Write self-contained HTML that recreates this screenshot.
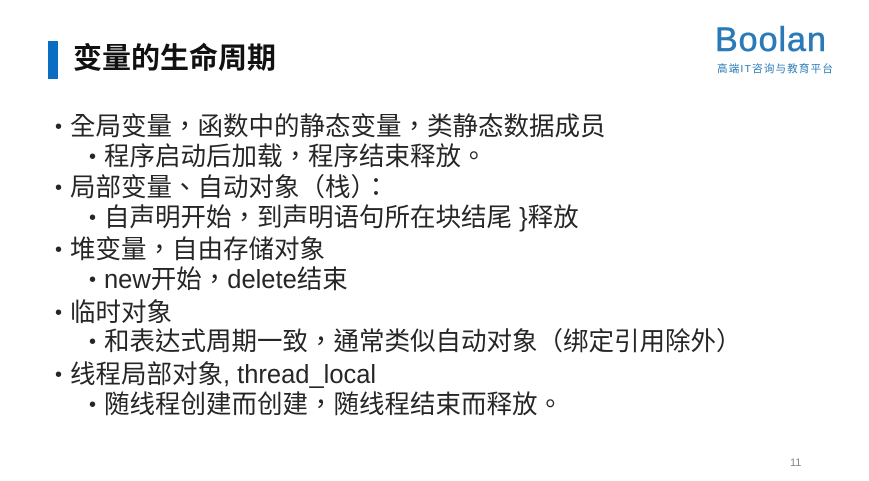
<!DOCTYPE html>
<html><head><meta charset="utf-8"><style>
body{margin:0;width:869px;height:481px;background:#fff;position:relative;overflow:hidden;font-family:"Liberation Sans","Noto Sans CJK TC",sans-serif;color:#222}
.bar{position:absolute;left:48px;top:41px;width:10px;height:38px;background:#0a6fc2}
.title{position:absolute;left:73px;top:42px;font-size:29px;font-weight:bold;color:#111;line-height:34px;font-family:"Liberation Sans","Noto Sans CJK SC",sans-serif}
.logo{position:absolute;left:715px;top:21px;font-size:34px;color:#2a7ab8;line-height:38px;letter-spacing:1px;-webkit-text-stroke:0.6px #2a7ab8}
.sub{position:absolute;left:717px;top:61px;font-size:10.5px;color:#2a7ab8;letter-spacing:1.2px}
.l{position:absolute;font-size:25.5px;line-height:30px;white-space:nowrap;color:#262626}
.l1{left:70px}.l2{left:104px}
.l::before{content:"•";position:absolute;left:-15px;font-size:20px}
.pg{position:absolute;left:790px;top:457px;font-size:11px;color:#888}
</style></head><body>
<div class="bar"></div>
<div class="title">变量的生命周期</div>
<div class="logo">Boolan</div>
<div class="sub">高端IT咨询与教育平台</div>
<div class="l l1" style="top:112px">全局变量，函数中的静态变量，类静态数据成员</div>
<div class="l l2" style="top:142px">程序启动后加载，程序结束释放。</div>
<div class="l l1" style="top:173px">局部变量、自动对象（栈）：</div>
<div class="l l2" style="top:203px">自声明开始，到声明语句所在块结尾 }释放</div>
<div class="l l1" style="top:235px">堆变量，自由存储对象</div>
<div class="l l2" style="top:265px">new开始，delete结束</div>
<div class="l l1" style="top:298px">临时对象</div>
<div class="l l2" style="top:327px">和表达式周期一致，通常类似自动对象（绑定引用除外）</div>
<div class="l l1" style="top:360px">线程局部对象, thread_local</div>
<div class="l l2" style="top:390px">随线程创建而创建，随线程结束而释放。</div>
<div class="pg">11</div>
</body></html>
